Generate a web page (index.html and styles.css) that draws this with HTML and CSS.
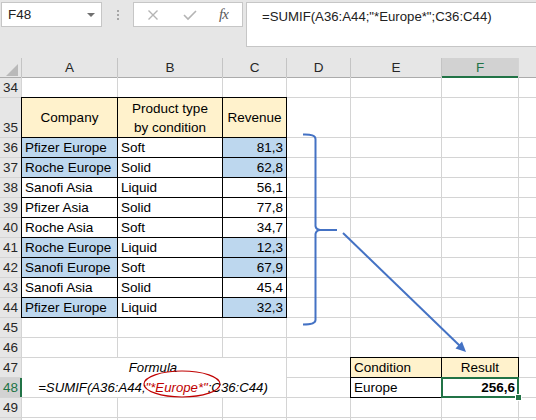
FILE: index.html
```html
<!DOCTYPE html>
<html lang="en">
<head>
    <meta charset="UTF-8">
    <title>SUMIF with wildcard</title>
    <link rel="stylesheet" href="styles.css">
</head>
<body>
    <div class="toolbar">
        <div class="namebox">F48<span class="caret"></span></div>
        <div class="grip"><i></i><i></i><i></i></div>
        <div class="fxbox">
            <svg width="12" height="12" viewBox="0 0 12 12"><path d="M1.5 1.5 L10.5 10.5 M10.5 1.5 L1.5 10.5" stroke="#b4b4b4" stroke-width="1.4" fill="none"/></svg>
            <svg width="14" height="12" viewBox="0 0 14 12"><path d="M1 6 L5 10 L13 2" stroke="#b4b4b4" stroke-width="1.6" fill="none"/></svg>
            <span class="fx">fx</span>
        </div>
        <div class="formula">=SUMIF(A36:A44;"*Europe*";C36:C44)</div>
    </div>

    <div class="sheet">
        <!-- column headers -->
        <div class="h corner"><svg width="12" height="12" viewBox="0 0 12 12"><polygon points="12,0 12,12 0,12" fill="#b9b9b9"/></svg></div>
        <div class="h">A</div>
        <div class="h">B</div>
        <div class="h">C</div>
        <div class="h">D</div>
        <div class="h">E</div>
        <div class="h sel">F</div>
        <div class="h"></div>

        <!-- 34 -->
        <div class="r">34</div>
        <div class="c"></div><div class="c"></div><div class="c"></div><div class="c"></div><div class="c"></div><div class="c"></div><div class="c"></div>

        <!-- 35 -->
        <div class="r">35</div>
        <div class="c t y mid">Company</div>
        <div class="c t y mid">Product type<br>by condition</div>
        <div class="c t y mid">Revenue</div>
        <div class="c"></div><div class="c"></div><div class="c"></div><div class="c"></div>

        <div class="r">36</div>
        <div class="c t b">Pfizer Europe</div><div class="c t">Soft</div><div class="c t b n">81,3</div>
        <div class="c"></div><div class="c"></div><div class="c"></div><div class="c"></div>

        <div class="r">37</div>
        <div class="c t b">Roche Europe</div><div class="c t">Solid</div><div class="c t b n">62,8</div>
        <div class="c"></div><div class="c"></div><div class="c"></div><div class="c"></div>

        <div class="r">38</div>
        <div class="c t">Sanofi Asia</div><div class="c t">Liquid</div><div class="c t n">56,1</div>
        <div class="c"></div><div class="c"></div><div class="c"></div><div class="c"></div>

        <div class="r">39</div>
        <div class="c t">Pfizer Asia</div><div class="c t">Solid</div><div class="c t n">77,8</div>
        <div class="c"></div><div class="c"></div><div class="c"></div><div class="c"></div>

        <div class="r">40</div>
        <div class="c t">Roche Asia</div><div class="c t">Soft</div><div class="c t n">34,7</div>
        <div class="c"></div><div class="c"></div><div class="c"></div><div class="c"></div>

        <div class="r">41</div>
        <div class="c t b">Roche Europe</div><div class="c t">Liquid</div><div class="c t b n">12,3</div>
        <div class="c"></div><div class="c"></div><div class="c"></div><div class="c"></div>

        <div class="r">42</div>
        <div class="c t b">Sanofi Europe</div><div class="c t">Soft</div><div class="c t b n">67,9</div>
        <div class="c"></div><div class="c"></div><div class="c"></div><div class="c"></div>

        <div class="r">43</div>
        <div class="c t">Sanofi Asia</div><div class="c t">Solid</div><div class="c t n">45,4</div>
        <div class="c"></div><div class="c"></div><div class="c"></div><div class="c"></div>

        <div class="r">44</div>
        <div class="c t b">Pfizer Europe</div><div class="c t">Liquid</div><div class="c t b n">32,3</div>
        <div class="c"></div><div class="c"></div><div class="c"></div><div class="c"></div>

        <div class="r">45</div>
        <div class="c"></div><div class="c"></div><div class="c"></div><div class="c"></div><div class="c"></div><div class="c"></div><div class="c"></div>

        <div class="r">46</div>
        <div class="c"></div><div class="c"></div><div class="c"></div><div class="c"></div><div class="c"></div><div class="c"></div><div class="c"></div>

        <!-- 47 / 48 -->
        <div class="r">47</div>
        <div class="c note">
            <div class="note-line">Formula</div>
            <div class="note-line">=SUMIF(A36:A44;<span class="crit">"*Europe*"</span>;C36:C44)</div>
        </div>
        <div class="c"></div>
        <div class="c t y">Condition</div>
        <div class="c t y ctr">Result</div>
        <div class="c"></div>

        <div class="r rsel">48</div>
        <div class="c"></div>
        <div class="c t">Europe</div>
        <div class="c t n bold active">256,6</div>
        <div class="c"></div>

        <div class="r">49</div>
        <div class="c"></div><div class="c"></div><div class="c"></div><div class="c"></div><div class="c"></div><div class="c"></div><div class="c"></div>

        <!-- row 50 only peeks in at the bottom edge -->
        <div class="r"></div>
        <div class="c"></div><div class="c"></div><div class="c"></div><div class="c"></div><div class="c"></div><div class="c"></div><div class="c"></div>
    </div>

    <!-- hand drawn shapes over the sheet -->
    <svg class="shapes" width="536" height="420" viewBox="0 0 536 420">
        <path d="M303 134.5 Q315.5 134 315.5 139 L315.5 226 Q316 229.5 320 230 L337 230 M320 230 Q316 230.5 315.5 234 L315.5 320 Q315.5 324.5 303 324.5"
              stroke="#4472c4" stroke-width="2" fill="none"/>
        <line x1="343" y1="233" x2="460" y2="346" stroke="#4472c4" stroke-width="2"/>
        <polygon points="466,352 455.5,348.5 462,341.5" fill="#4472c4"/>
        <ellipse cx="182" cy="384" rx="38" ry="13" stroke="#c00000" stroke-width="1.2" fill="none"/>
    </svg>
</body>
</html>
```

FILE: styles.css
```css
body {
    margin: 0;
    width: 536px;
    height: 420px;
    overflow: hidden;
    position: relative;
    background: #ffffff;
    font-family: "Liberation Sans", Arial, sans-serif;
    color: #000000;
}
/* Formula bar */
.toolbar {
    height: 58px;
    background: #e6e6e6;
    display: flex;
    align-items: flex-start;
    padding-top: 2px;
    box-sizing: border-box;
}
.namebox {
    position: relative;
    margin-left: 1px;
    width: 101px;
    height: 25px;
    box-sizing: border-box;
    background: #ffffff;
    border: 1px solid #c6c6c6;
    font-size: 13.5px;
    line-height: 23px;
    padding-left: 6px;
    color: #222222;
}
.caret {
    position: absolute;
    right: 6px;
    top: 10px;
    border-left: 4px solid transparent;
    border-right: 4px solid transparent;
    border-top: 4px solid #707070;
}
.grip {
    width: 31px;
    height: 25px;
    display: flex;
    flex-direction: column;
    align-items: center;
    justify-content: center;
    gap: 2px;
}
.grip i {
    display: block;
    width: 2px;
    height: 2px;
    background: #a6a6a6;
}
.fxbox {
    width: 110px;
    height: 25px;
    box-sizing: border-box;
    background: #ffffff;
    border: 1px solid #c6c6c6;
    display: flex;
    align-items: center;
    padding-left: 13px;
    gap: 24px;
}
.fx {
    font-family: "Liberation Serif", serif;
    font-style: italic;
    font-size: 15px;
    color: #5a5a5a;
    margin-left: -2px;
    letter-spacing: -1px;
}
.formula {
    flex: 1;
    margin-left: 3px;
    height: 45px;
    box-sizing: border-box;
    background: #ffffff;
    border: 1px solid #c6c6c6;
    border-right: none;
    padding: 6px 0 0 15px;
    font-size: 13.2px;
    color: #222222;
}
/* Grid */
.sheet {
    display: grid;
    grid-template-columns: 21px 95px 104px 63px 63px 90px 76px 1fr;
    grid-template-rows: 19px 19px 39px repeat(15, 19px);
    gap: 1px;
    background: #d4d4d4;
    font-size: 13.5px;
}
.h {
    background: #e6e6e6;
    text-align: center;
    line-height: 20px;
    font-size: 13.5px;
    color: #262626;
    box-shadow: 1px 0 0 #c4c4c4, 0 1px 0 #ababab;
}
.corner {
    display: flex;
    justify-content: flex-end;
    align-items: flex-end;
    padding: 0 3px 1px 0;
}
.h.sel {
    background: #d2d2d2;
    color: #217346;
    box-shadow: inset 0 -1px 0 #217346, 0 1px 0 #217346;
}
.r {
    background: #e6e6e6;
    display: flex;
    align-items: flex-end;
    justify-content: center;
    font-size: 13.5px;
    line-height: 18px;
    color: #262626;
}
.r.rsel {
    background: #d2d2d2;
    color: #217346;
    box-shadow: inset -1px 0 0 #217346, 1px 0 0 #217346;
}
.c {
    background: #ffffff;
    padding: 0 3px;
    line-height: 20px;
    white-space: nowrap;
    overflow: hidden;
}
.t {
    box-shadow: 0 0 0 1px #000000;
}
.y {
    background: #fff2cc;
}
.b {
    background: #bdd7ee;
}
.n {
    text-align: right;
}
.ctr {
    text-align: center;
}
.bold {
    font-weight: bold;
}
.mid {
    display: flex;
    align-items: center;
    justify-content: center;
    text-align: center;
    line-height: 19px;
}
.note {
    grid-column: span 3;
    grid-row: span 2;
    overflow: visible;
    font-style: italic;
    font-size: 13.2px;
    text-align: center;
    padding-left: 0;
    padding-right: 2px;
}
.note-line {
    height: 20px;
}
.crit {
    color: #c00000;
}
.active {
    position: relative;
    z-index: 1;
    overflow: visible;
    box-shadow: 0 0 0 1px #217346, inset 0 0 0 1px #217346;
}
.active::after {
    content: "";
    position: absolute;
    right: -4px;
    bottom: -4px;
    width: 5px;
    height: 5px;
    background: #217346;
    border: 1px solid #ffffff;
}
.shapes {
    position: absolute;
    left: 0;
    top: 0;
    pointer-events: none;
}
```
